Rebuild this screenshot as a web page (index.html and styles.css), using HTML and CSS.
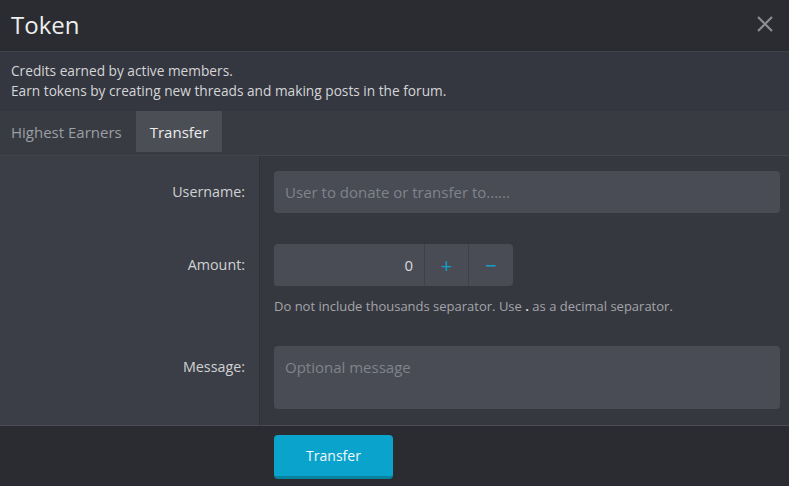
FILE: index.html
```html
<!DOCTYPE html>
<html lang="en">
<head>
    <meta charset="UTF-8">
    <meta name="viewport" content="width=device-width, initial-scale=1.0">
    <title>Token</title>
    <link rel="stylesheet" href="styles.css">
</head>
<body>
    <div class="overlay">
        <div class="overlay-title">
            <h2>Token</h2>
            <span class="close">
                <svg width="18" height="18" viewBox="0 0 18 18"><path d="M2 2L16 16M16 2L2 16" stroke="#8b8d91" stroke-width="2.2"/></svg>
            </span>
        </div>
        <div class="block-desc">
            Credits earned by active members.<br>
            Earn tokens by creating new threads and making posts in the forum.
        </div>
        <div class="tabs">
            <a class="tab">Highest Earners</a>
            <a class="tab active">Transfer</a>
        </div>
        <form class="form-rows">
            <dl class="form-row">
                <dt><label for="username">Username:</label></dt>
                <dd><input type="text" id="username" class="input" placeholder="User to donate or transfer to......"></dd>
            </dl>
            <dl class="form-row">
                <dt><label for="amount">Amount:</label></dt>
                <dd>
                    <div class="stepper">
                        <input type="text" id="amount" class="input number" value="0">
                        <button type="button" class="step">+</button>
                        <button type="button" class="step">&minus;</button>
                    </div>
                    <div class="explain">Do not include thousands separator. Use <b>.</b> as a decimal separator.</div>
                </dd>
            </dl>
            <dl class="form-row">
                <dt><label for="message">Message:</label></dt>
                <dd><textarea id="message" class="input textarea" placeholder="Optional message"></textarea></dd>
            </dl>
        </form>
        <div class="form-submit">
            <button type="button" class="button">Transfer</button>
        </div>
    </div>
</body>
</html>
```

FILE: styles.css
```css
* {
    box-sizing: border-box;
}
body {
    margin: 0;
    font-family: "Open Sans", "Noto Sans", Arial, sans-serif;
    font-size: 13px;
    color: #d4d5d7;
    background-color: #2a2c31;
}
.overlay {
    width: 789px;
    height: 486px;
    display: flex;
    flex-direction: column;
    overflow: hidden;
}
.overlay-title {
    height: 52px;
    display: flex;
    align-items: center;
    justify-content: space-between;
    padding: 0 15px 3px 11px;
    background: #2a2c31;
    border-bottom: 1px solid #40424a;
}
.overlay-title h2 {
    margin: 0;
    font-size: 24px;
    font-weight: 400;
    color: #eeeeef;
}
.close {
    display: flex;
}
.block-desc {
    background: #353740;
    padding: 9px 11px 10px;
    font-size: 13.7px;
    line-height: 20px;
}
.tabs {
    display: flex;
    gap: 14px;
    background: #393b43;
    border-bottom: 1px solid #44464e;
    padding-bottom: 3px;
}
.tab {
    height: 41px;
    display: flex;
    align-items: center;
    padding: 0 14px;
    font-size: 15px;
    color: #9c9ea3;
}
.tab:first-child {
    padding-left: 11px;
    padding-right: 0;
}
.tab.active {
    background: #4b4e55;
    color: #ececed;
}
.form-rows {
    margin: 0;
    flex: 1;
    background: #363840;
    border-bottom: 1px solid #4a4c53;
    display: flex;
    flex-direction: column;
}
.form-row {
    margin: 0;
    display: flex;
}
.form-row:last-child {
    flex: 1;
}
.form-row dt {
    width: 260px;
    flex-shrink: 0;
    background: #3b3e46;
    border-right: 1px solid #2f3137;
    padding: 15px 14px 0 0;
    text-align: right;
}
.form-row dt label {
    display: block;
    line-height: 42px;
    font-size: 14.3px;
    color: #d0d1d3;
}
.form-row dd {
    margin: 0;
    flex: 1;
    padding: 15px 9px 15px 14px;
}
.form-row + .form-row dt,
.form-row + .form-row dd {
    padding-top: 16px;
}
.input {
    display: block;
    width: 100%;
    height: 42px;
    border: none;
    border-radius: 4px;
    background: #494c55;
    color: #d9dadc;
    font: inherit;
    font-size: 15px;
    padding: 0 11px;
    outline: none;
}
.input::placeholder {
    color: #80838a;
}
.textarea {
    height: 63px;
    padding: 11px 11px;
    resize: none;
}
.stepper {
    display: flex;
    width: 239px;
    height: 42px;
    border-radius: 4px;
    background: #494c55;
}
.stepper .number {
    flex: 1;
    text-align: right;
    border-radius: 4px 0 0 4px;
    padding-right: 11px;
}
.step {
    width: 44px;
    border: none;
    border-left: 1px solid #3e4149;
    background: transparent;
    color: #159fc6;
    font: inherit;
    font-size: 20px;
    padding: 0;
}
.step:last-child {
    width: 45px;
}
.explain {
    margin-top: 11px;
    font-size: 13px;
    line-height: 18px;
    color: #a3a5a9;
}
.explain b {
    color: #d4d5d7;
}
.form-submit {
    height: 60px;
    background: #2a2c31;
    padding: 9px 0 0 274px;
}
.button {
    width: 119px;
    height: 44px;
    border: none;
    border-bottom: 3px solid #08839f;
    border-radius: 4px;
    background: #0aa3cb;
    color: #f4f8fa;
    font: inherit;
    font-size: 14px;
}
```
